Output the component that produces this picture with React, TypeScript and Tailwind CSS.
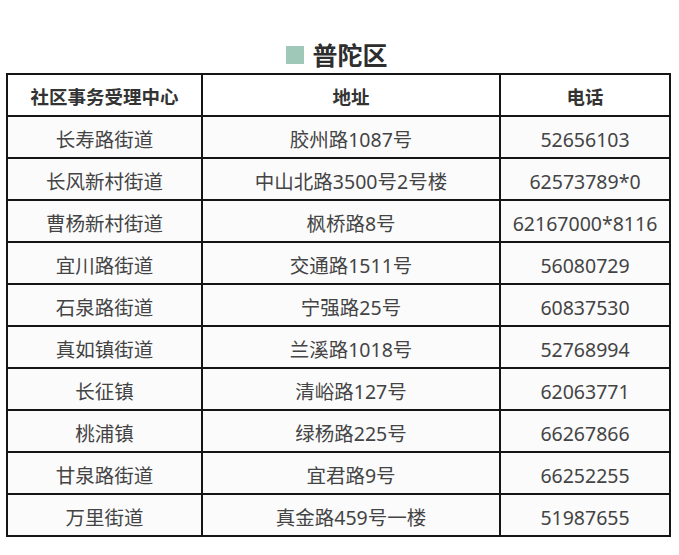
import React from "react";

const rows: [string, string, string][] = [
  ["长寿路街道", "胶州路1087号", "52656103"],
  ["长风新村街道", "中山北路3500号2号楼", "62573789*0"],
  ["曹杨新村街道", "枫桥路8号", "62167000*8116"],
  ["宜川路街道", "交通路1511号", "56080729"],
  ["石泉路街道", "宁强路25号", "60837530"],
  ["真如镇街道", "兰溪路1018号", "52768994"],
  ["长征镇", "清峪路127号", "62063771"],
  ["桃浦镇", "绿杨路225号", "66267866"],
  ["甘泉路街道", "宜君路9号", "66252255"],
  ["万里街道", "真金路459号一楼", "51987655"],
];

export default function App() {
  return (
    <div
      className="w-[679px] h-[555px] bg-white overflow-hidden"
      style={{ fontFamily: '"Noto Sans", "Noto Sans CJK SC", sans-serif' }}
    >
      <div className="flex items-center justify-center pt-[37px] pr-[5px] h-[73px] gap-[8px]">
        <div className="w-[18px] h-[18px] bg-[#9fc8b9]" />
        <div className="text-[25px] leading-[30px] font-bold text-[#2e2e2e]">
          普陀区
        </div>
      </div>
      <table className="ml-[6px] w-[663px] border-collapse border-2 border-[#151515] table-fixed">
        <colgroup>
          <col className="w-[195px]" />
          <col className="w-[298px]" />
          <col className="w-[170px]" />
        </colgroup>
        <thead>
          <tr className="h-[42px]">
            {["社区事务受理中心", "地址", "电话"].map((h) => (
              <th
                key={h}
                className="border-2 border-[#151515] text-[18.5px] leading-[26px] font-bold text-[#333] p-0 pt-[4px]"
              >
                {h}
              </th>
            ))}
          </tr>
        </thead>
        <tbody>
          {rows.map((r, i) => (
            <tr key={i} className="h-[42px] bg-[#fbfbfc]">
              {r.map((c, j) => (
                <td
                  key={j}
                  className="border-2 border-[#151515] text-center text-[19.5px] leading-[26px] text-[#444] p-0 pt-[5px] whitespace-nowrap"
                >
                  {c}
                </td>
              ))}
            </tr>
          ))}
        </tbody>
      </table>
    </div>
  );
}
